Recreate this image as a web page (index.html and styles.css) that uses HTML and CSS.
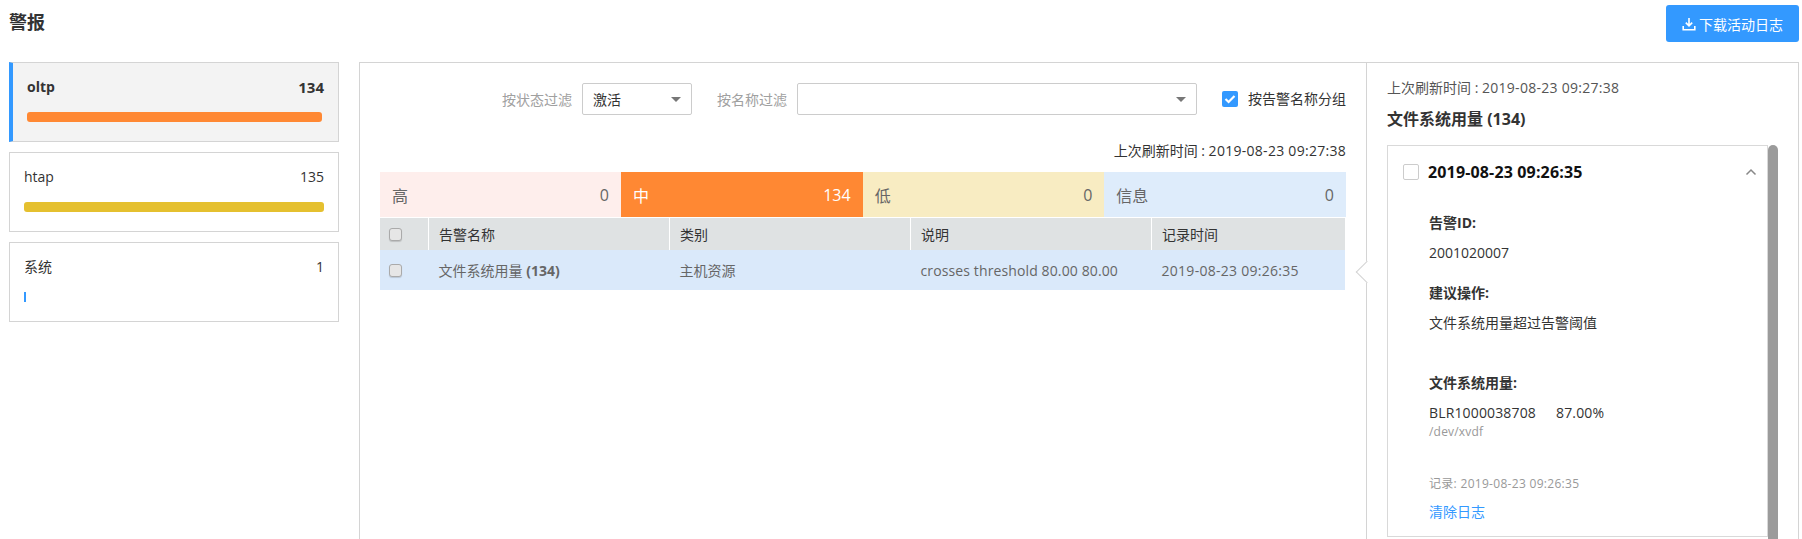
FILE: index.html
```html
<!DOCTYPE html>
<html lang="zh">
<head>
  <meta charset="UTF-8" />
  <title>警报</title>
  <link rel="stylesheet" href="styles.css">
</head>
<body>

  <header class="top">
    <h1>警报</h1>
    <button class="download">
      <svg width="14" height="14" viewBox="0 0 14 14"><path d="M7 1v7.500M3.800 5.600 7 8.800l3.200-3.200M1.200 9v3.800h11.600V9" fill="none" stroke="#fff" stroke-width="1.600"/></svg>
      下载活动日志
    </button>
  </header>

  <div class="main">
    <aside class="side">
      <div class="cluster active">
        <div class="cluster-head"><span>oltp</span><span class="count">134</span></div>
        <div class="bar bar-orange"></div>
      </div>
      <div class="cluster">
        <div class="cluster-head"><span>htap</span><span>135</span></div>
        <div class="bar bar-yellow"></div>
      </div>
      <div class="cluster">
        <div class="cluster-head"><span>系统</span><span>1</span></div>
        <div class="bar bar-blue"></div>
      </div>
    </aside>

    <section class="panel">
      <div class="list">
        <div class="filters">
          <label class="filter-label">按状态过滤</label>
          <div class="select select-state">激活<i class="caret"></i></div>
          <label class="filter-label label-name">按名称过滤</label>
          <div class="select select-name"><i class="caret"></i></div>
          <span class="blue-check">
            <svg width="12" height="10" viewBox="0 0 12 10"><path d="M1.500 5 4.600 8 10.500 2" fill="none" stroke="#fff" stroke-width="2.200"/></svg>
          </span>
          <span class="group-label">按告警名称分组</span>
        </div>

        <div class="refresh">上次刷新时间 : <span class="date">2019-08-23 09:27:38</span></div>

        <div class="levels">
          <div class="level high"><span>高</span><span>0</span></div>
          <div class="level mid"><span>中</span><span>134</span></div>
          <div class="level low"><span>低</span><span>0</span></div>
          <div class="level info"><span>信息</span><span>0</span></div>
        </div>

        <table class="alerts">
          <thead>
            <tr>
              <th class="col-check"><span class="tick"></span></th>
              <th class="col-name">告警名称</th>
              <th class="col-type">类别</th>
              <th class="col-desc">说明</th>
              <th>记录时间</th>
            </tr>
          </thead>
          <tbody>
            <tr>
              <td><span class="tick"></span></td>
              <td>文件系统用量 <b>(134)</b></td>
              <td>主机资源</td>
              <td class="desc">crosses threshold 80.00 80.00</td>
              <td class="date">2019-08-23 09:26:35</td>
            </tr>
          </tbody>
        </table>
      </div>

      <div class="detail">
        <span class="notch"></span>
        <div class="refresh-small">上次刷新时间 : <span class="date">2019-08-23 09:27:38</span></div>
        <h2>文件系统用量 (134)</h2>
        <div class="detail-scroll">
          <div class="card">
            <div class="card-head">
              <span class="square"></span>
              <strong>2019-08-23 09:26:35</strong>
              <svg class="chevron" width="12" height="8" viewBox="0 0 12 8"><path d="M1.500 6.500 6 2l4.500 4.500" fill="none" stroke="#888" stroke-width="1.500"/></svg>
            </div>
            <div class="card-body">
              <div class="field-title">告警ID:</div>
              <div class="field-value">2001020007</div>
              <div class="field-title">建议操作:</div>
              <div class="field-value">文件系统用量超过告警阈值</div>
              <div class="field-title usage">文件系统用量:</div>
              <div class="field-value host">BLR1000038708<span class="pct">87.00%</span></div>
              <div class="path">/dev/xvdf</div>
              <div class="logged">记录: 2019-08-23 09:26:35</div>
              <a class="clear" href="#">清除日志</a>
            </div>
          </div>
          <div class="scrollbar"></div>
        </div>
      </div>
    </section>
  </div>

</body>
</html>
```

FILE: styles.css
```css
html, body {
  margin: 0;
  height: 539px;
  overflow: hidden;
}
body {
  font-family: "Open Sans", "Noto Sans CJK SC", sans-serif;
  font-size: 14px;
  color: #333;
  background: #fff;
}
.date {
  letter-spacing: 0.28px;
}
.top {
  display: flex;
  justify-content: space-between;
  height: 62px;
  padding: 5px 3px 0 9px;
  box-sizing: border-box;
}
h1 {
  margin: 6px 0 0;
  font-size: 18px;
  line-height: 22px;
  font-weight: 700;
}
.download {
  display: flex;
  align-items: center;
  gap: 3px;
  width: 133px;
  height: 37px;
  padding: 0 0 0 16px;
  background: #3399ff;
  color: #fff;
  border: none;
  border-radius: 3px;
  font-family: inherit;
  font-size: 14px;
}
.main {
  display: flex;
  gap: 20px;
  padding: 0 3px 0 9px;
}

/* left column */
.side {
  width: 330px;
  flex: none;
}
.cluster {
  height: 80px;
  box-sizing: border-box;
  border: 1px solid #d4d4d4;
  padding: 14px 14px 0 14px;
  margin-bottom: 10px;
}
.cluster.active {
  background: #f3f3f3;
  border-left: 4px solid #3399ff;
  font-weight: 700;
}
.cluster-head {
  display: flex;
  justify-content: space-between;
  line-height: 20px;
}
.count {
  font-size: 15px;
}
.bar {
  height: 10px;
  margin-top: 15px;
  border-radius: 3px;
}
.bar-orange { background: #ff8833; width: 295px; }
.bar-yellow { background: #e5c02f; }
.bar-blue { background: #3399ff; width: 2px; border-radius: 0; }

/* middle part */
.panel {
  flex: 1;
  display: flex;
  height: 477px;
  box-sizing: border-box;
  border: 1px solid #d4d4d4;
  border-bottom: none;
}
.list {
  width: 1006px;
  flex: none;
  padding: 0 20px;
  box-sizing: border-box;
}
.filters {
  display: flex;
  align-items: center;
  justify-content: flex-end;
  height: 32px;
  margin-top: 20px;
}
.filter-label {
  color: #a0a0a0;
  margin-right: 10px;
}
.label-name {
  margin-left: 25px;
}
.select {
  display: flex;
  align-items: center;
  justify-content: space-between;
  height: 32px;
  box-sizing: border-box;
  border: 1px solid #ccc;
  border-radius: 2px;
  padding: 0 10px;
}
.select-state { width: 110px; }
.select-name { width: 400px; justify-content: flex-end; }
.caret {
  width: 0;
  height: 0;
  border-left: 5px solid transparent;
  border-right: 5px solid transparent;
  border-top: 5px solid #777;
}
.blue-check {
  display: flex;
  align-items: center;
  justify-content: center;
  width: 16px;
  height: 16px;
  margin-left: 25px;
  background: #3399ff;
  border-radius: 2px;
}
.group-label {
  margin-left: 10px;
  line-height: 20px;
}
.refresh {
  margin-top: 26px;
  height: 31px;
  line-height: 20px;
  text-align: right;
}
.levels {
  display: flex;
  height: 45px;
}
.level {
  flex: 1;
  display: flex;
  align-items: center;
  justify-content: space-between;
  padding: 0 12px;
  font-size: 16px;
  color: #666;
}
.high { flex: 0 0 241px; box-sizing: border-box; background: #feeeec; }
.mid { background: #ff8833; color: #fff; }
.low { background: #f8ecc2; }
.info { background: #deecfb; }

.alerts {
  width: 965px;
  table-layout: fixed;
  border-collapse: collapse;
  margin-top: 1px;
  font-size: 14px;
}
.alerts th {
  height: 32px;
  padding: 0 0 0 10px;
  background: #dfe2e3;
  border-right: 1px solid #fff;
  font-weight: 400;
  text-align: left;
}
.alerts th:last-child {
  border-right: none;
}
.alerts td {
  height: 40px;
  padding: 0 0 0 10px;
  background: #dae9fa;
  color: #666;
}
.alerts td.desc {
  letter-spacing: 0.12px;
}
.col-check { width: 38px; }
.col-name { width: 230px; }
.col-type { width: 230px; }
.col-desc { width: 230px; }
.tick {
  display: block;
  width: 11px;
  height: 11px;
  margin-left: -1px;
  border: 1px solid #aaa;
  border-radius: 3px;
  background: #e6e6e6;
  box-shadow: 0 1px 1px rgba(0, 0, 0, 0.15);
}

/* right part */
.detail {
  position: relative;
  flex: 1;
  border-left: 1px solid #d4d4d4;
  padding: 0 20px;
}
.notch {
  position: absolute;
  left: -8px;
  top: 201px;
  width: 15px;
  height: 15px;
  background: #fff;
  border-left: 1px solid #d4d4d4;
  border-bottom: 1px solid #d4d4d4;
  transform: rotate(45deg);
}
.refresh-small {
  margin-top: 15px;
  line-height: 20px;
  color: #555;
}
h2 {
  margin: 11px 0 0;
  font-size: 16px;
  line-height: 20px;
  font-weight: 700;
}
.detail-scroll {
  display: flex;
  align-items: flex-start;
  margin-top: 16px;
}
.card {
  width: 381px;
  height: 392px;
  box-sizing: border-box;
  border: 1px solid #d9d9d9;
  flex: none;
}
.card-head {
  display: flex;
  align-items: center;
  height: 20px;
  margin-top: 16px;
  padding: 0 10px 0 15px;
}
.square {
  width: 14px;
  height: 14px;
  border: 1px solid #ccc;
  border-radius: 2px;
}
.card-head strong {
  flex: 1;
  margin-left: 9px;
  font-size: 16px;
  letter-spacing: 0.15px;
  color: #111;
}
.card-body {
  padding: 31px 0 0 41px;
}
.field-title {
  font-weight: 700;
  line-height: 20px;
}
.field-value {
  margin-top: 10px;
  margin-bottom: 20px;
  line-height: 20px;
}
.usage {
  margin-top: 40px;
}
.host {
  margin-bottom: 0;
  letter-spacing: 0.15px;
}
.pct {
  margin-left: 20px;
}
.path {
  font-size: 12px;
  line-height: 18px;
  letter-spacing: 0.2px;
  color: #999;
}
.logged {
  margin-top: 33px;
  font-size: 12px;
  line-height: 20px;
  letter-spacing: 0.3px;
  color: #999;
}
.clear {
  display: block;
  margin-top: 8px;
  line-height: 20px;
  color: #3399ff;
  text-decoration: none;
}
.scrollbar {
  width: 10px;
  height: 394px;
  background: #9b9b9b;
  border-radius: 5px 5px 0 0;
  flex: none;
}
```
